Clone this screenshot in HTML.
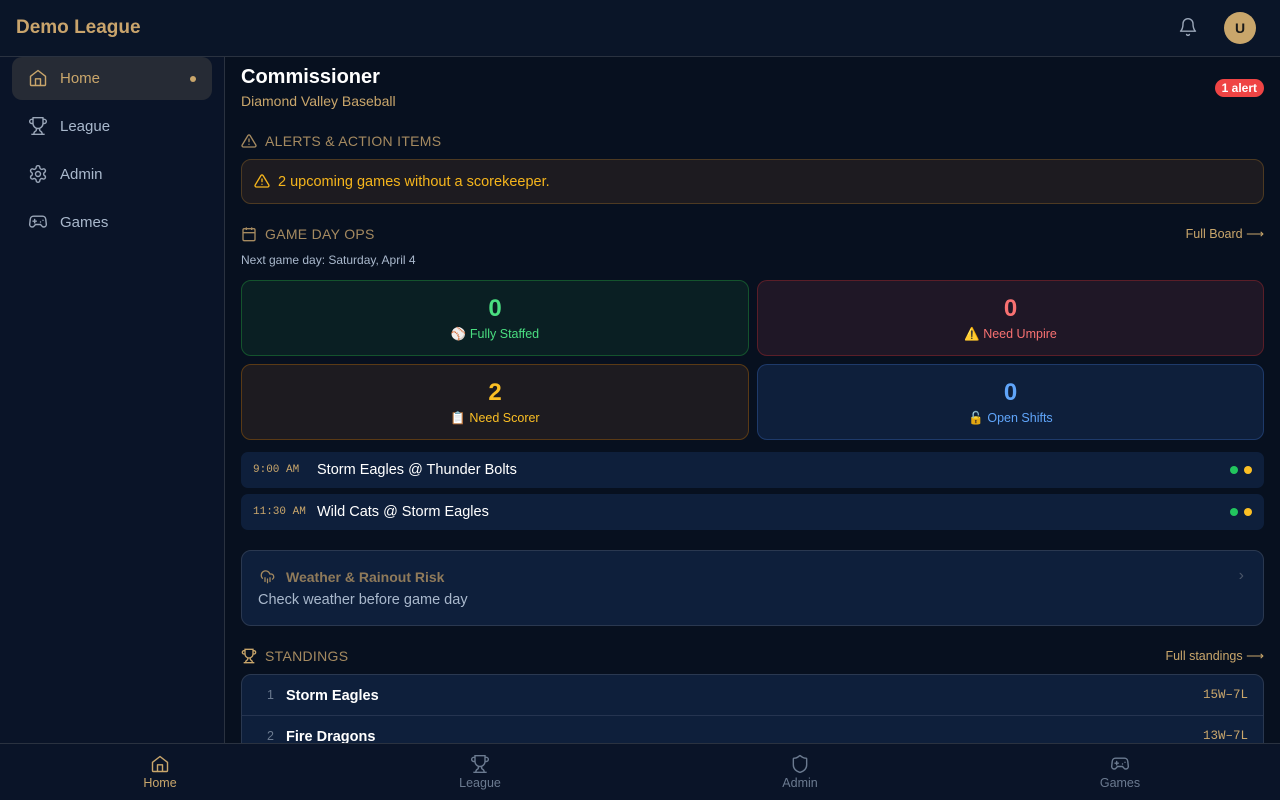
<!DOCTYPE html>
<html><head><meta charset="utf-8"><style>
*{box-sizing:border-box;margin:0;padding:0}
body{width:1280px;height:800px;overflow:hidden;background:#07101f;font-family:"Liberation Sans",sans-serif;color:#fff;position:relative}
.hdr{position:absolute;left:0;top:0;width:1280px;height:57px;background:#0a1528;border-bottom:1px solid #2a3240}
.logo{position:absolute;left:16px;top:17px;font-size:19px;font-weight:bold;color:#c9a46c}
.bell{position:absolute;left:1178px;top:17px}
.av{position:absolute;left:1224px;top:12px;width:32px;height:32px;border-radius:50%;background:#c9a66b;color:#1a1a1a;font-weight:bold;font-size:14px;text-align:center;line-height:32px}
.side{position:absolute;left:0;top:57px;width:225px;height:686px;background:#0a1428;border-right:1px solid #2a3240}
.nav{position:absolute;left:12px;width:200px;height:43px;border-radius:10px;font-size:15px;color:#a9b8cc}
.nav svg{position:absolute;left:16px;top:11px}
.nav span{position:absolute;left:48px;top:13px}
.nav.act{background:#262b35;color:#c9a66b}
.dot{position:absolute;right:16px;top:19px;width:6px;height:6px;border-radius:50%;background:#c9a66b}
.main{position:absolute;left:241px;top:57px;width:1023px}
.abs{position:absolute}
.sec{font-size:14px;color:#a58a60;letter-spacing:.3px}
.card{position:absolute;border-radius:10px;border:1px solid}
.big{position:absolute;width:100%;top:14px;text-align:center;font-size:24px;font-weight:bold}
.lbl{position:absolute;width:100%;top:46px;text-align:center;font-size:12.5px}
.game{position:absolute;left:0;width:1023px;height:36px;background:#0e1f3b;border-radius:7px}
.game .t{position:absolute;left:12px;top:12px;font-family:"Liberation Mono",monospace;font-size:11px;color:#c9a66b}
.game .n{position:absolute;left:76px;top:10px;font-size:14.5px}
.gd{position:absolute;top:14px;width:8px;height:8px;border-radius:50%}
.bot{position:absolute;left:0;top:743px;width:1280px;height:57px;background:#0a1428;border-top:1px solid #2a3240}
.bi{position:absolute;top:0;width:320px;text-align:center;font-size:12.5px;color:#6b7a90}
.bi svg{display:block;margin:10px auto 2px}
</style></head><body>
<div class="hdr"><div class="logo">Demo League</div>
<svg class="bell" width="20" height="20" viewBox="0 0 24 24" fill="none" stroke="#9aa6b8" stroke-width="1.7" stroke-linecap="round" stroke-linejoin="round"><path d="M6 8a6 6 0 0 1 12 0c0 7 3 9 3 9H3s3-2 3-9"/><path d="M10.3 21a1.9 1.9 0 0 0 3.4 0"/></svg>
<div class="av">U</div></div>
<div class="side">
<div class="nav act" style="top:0"><svg width="20" height="20" viewBox="0 0 24 24" fill="none" stroke="#c9a66b" stroke-width="1.7" stroke-linejoin="round"><path d="M3 10l9-7 9 7v10a1 1 0 0 1-1 1H4a1 1 0 0 1-1-1z"/><path d="M9 21v-8h6v8"/></svg><span>Home</span><div class="dot"></div></div>
<div class="nav" style="top:48px"><svg width="20" height="20" viewBox="0 0 24 24" fill="none" stroke="#9aa6b8" stroke-width="1.7" stroke-linejoin="round"><path d="M6 9H4.5a2.5 2.5 0 0 1 0-5H6M18 9h1.5a2.5 2.5 0 0 0 0-5H18M4 22h16M10 14.7V17c0 .6-.5 1-1 1.2-1.2.5-2 2-2 3.8M14 14.7V17c0 .6.5 1 1 1.2 1.2.5 2 2 2 3.8M18 2H6v7a6 6 0 0 0 12 0z"/></svg><span>League</span></div>
<div class="nav" style="top:96px"><svg width="20" height="20" viewBox="0 0 24 24" fill="none" stroke="#9aa6b8" stroke-width="1.7"><circle cx="12" cy="12" r="3"/><path d="M12.2 2h-.4a2 2 0 0 0-2 2v.2a2 2 0 0 1-1 1.7l-.4.3a2 2 0 0 1-2 0l-.2-.1a2 2 0 0 0-2.7.7l-.2.4a2 2 0 0 0 .7 2.7l.2.1a2 2 0 0 1 1 1.7v.5a2 2 0 0 1-1 1.7l-.2.1a2 2 0 0 0-.7 2.7l.2.4a2 2 0 0 0 2.7.7l.2-.1a2 2 0 0 1 2 0l.4.3a2 2 0 0 1 1 1.7v.2a2 2 0 0 0 2 2h.4a2 2 0 0 0 2-2v-.2a2 2 0 0 1 1-1.7l.4-.3a2 2 0 0 1 2 0l.2.1a2 2 0 0 0 2.7-.7l.2-.4a2 2 0 0 0-.7-2.7l-.2-.1a2 2 0 0 1-1-1.7v-.5a2 2 0 0 1 1-1.7l.2-.1a2 2 0 0 0 .7-2.7l-.2-.4a2 2 0 0 0-2.7-.7l-.2.1a2 2 0 0 1-2 0l-.4-.3a2 2 0 0 1-1-1.7V4a2 2 0 0 0-2-2z"/></svg><span>Admin</span></div>
<div class="nav" style="top:144px"><svg width="20" height="20" viewBox="0 0 24 24" fill="none" stroke="#9aa6b8" stroke-width="1.7" stroke-linecap="round"><path d="M6 11h4M8 9v4M15 12h.01M18 10h.01"/><path d="M17.3 5H6.7a4 4 0 0 0-4 3.6L2 15a3 3 0 0 0 3 3c1 0 2-.5 2.5-1.3L9 15h6l1.5 1.7c.5.8 1.5 1.3 2.5 1.3a3 3 0 0 0 3-3l-.7-6.4a4 4 0 0 0-4-3.6z"/></svg><span>Games</span></div>
</div>
<div class="main">
<div class="abs" style="left:0;top:9px;font-size:20px;font-weight:bold">Commissioner</div>
<div class="abs" style="left:0;top:36px;font-size:14px;color:#c9a66b">Diamond Valley Baseball</div>
<div class="abs" style="right:0;top:22px;background:#ef4444;border-radius:9px;padding:2px 7px;font-size:12px;font-weight:bold">1 alert</div>
<svg class="abs" style="left:0;top:76px" width="16" height="16" viewBox="0 0 24 24" fill="none" stroke="#a58a60" stroke-width="2" stroke-linecap="round"><path d="M10.3 3.9 1.8 18a2 2 0 0 0 1.7 3h17a2 2 0 0 0 1.7-3L13.7 3.9a2 2 0 0 0-3.4 0zM12 9v4M12 17h.01"/></svg>
<div class="abs sec" style="left:24px;top:76px">ALERTS &amp; ACTION ITEMS</div>
<div class="card" style="left:0;top:102px;width:1023px;height:45px;background:#1d1b20;border-color:#4d3a22"></div>
<svg class="abs" style="left:13px;top:116px" width="16" height="16" viewBox="0 0 24 24" fill="none" stroke="#f5b51c" stroke-width="2" stroke-linecap="round"><path d="M10.3 3.9 1.8 18a2 2 0 0 0 1.7 3h17a2 2 0 0 0 1.7-3L13.7 3.9a2 2 0 0 0-3.4 0zM12 9v4M12 17h.01"/></svg>
<div class="abs" style="left:37px;top:117px;font-size:14.5px;color:#f5b51c">2 upcoming games without a scorekeeper.</div>
<svg class="abs" style="left:0;top:169px" width="16" height="16" viewBox="0 0 24 24" fill="none" stroke="#a58a60" stroke-width="2"><rect x="3" y="4" width="18" height="18" rx="2"/><path d="M16 2v4M8 2v4M3 10h18M8 14h.01M12 14h.01M16 14h.01M8 18h.01M12 18h.01M16 18h.01"/></svg>
<div class="abs sec" style="left:24px;top:169px">GAME DAY OPS</div>
<div class="abs" style="right:0;top:169px;font-size:12.5px;color:#c9a66b">Full Board ⟶</div>
<div class="abs" style="left:0;top:196px;font-size:12px;color:#a9b8cc">Next game day: Saturday, April 4</div>
<div class="card" style="left:0;top:223px;width:508px;height:76px;background:#0a1f23;border-color:#14532d"><div class="big" style="color:#4ade80">0</div><div class="lbl" style="color:#4ade80">⚾ Fully Staffed</div></div>
<div class="card" style="left:516px;top:223px;width:507px;height:76px;background:#1f1726;border-color:#5a1e28"><div class="big" style="color:#f87171">0</div><div class="lbl" style="color:#f87171">⚠️ Need Umpire</div></div>
<div class="card" style="left:0;top:307px;width:508px;height:76px;background:#1d1b20;border-color:#5a3a15"><div class="big" style="color:#fbbf24">2</div><div class="lbl" style="color:#fbbf24">📋 Need Scorer</div></div>
<div class="card" style="left:516px;top:307px;width:507px;height:76px;background:#0e1f3b;border-color:#1e3a6a"><div class="big" style="color:#60a5fa">0</div><div class="lbl" style="color:#60a5fa">🔓 Open Shifts</div></div>
<div class="game" style="top:395px"><div class="t">9:00 AM</div><div class="n">Storm Eagles @ Thunder Bolts</div><div class="gd" style="right:26px;background:#22c55e"></div><div class="gd" style="right:12px;background:#fbbf24"></div></div>
<div class="game" style="top:437px"><div class="t">11:30 AM</div><div class="n">Wild Cats @ Storm Eagles</div><div class="gd" style="right:26px;background:#22c55e"></div><div class="gd" style="right:12px;background:#fbbf24"></div></div>
<div class="card" style="left:0;top:493px;width:1023px;height:76px;background:#0e1f3b;border-color:#2a3850"></div>
<svg class="abs" style="left:19px;top:512px" width="15" height="15" viewBox="0 0 24 24" fill="none" stroke="#a58a60" stroke-width="2" stroke-linecap="round"><path d="M4 14.9A7 7 0 1 1 15.7 8h1.8a4.5 4.5 0 0 1 2.5 8.2M16 14v6M8 14v6M12 16v6"/></svg>
<div class="abs" style="left:45px;top:512px;font-size:14px;font-weight:bold;color:#8f7a5a">Weather &amp; Rainout Risk</div>
<div class="abs" style="left:17px;top:535px;font-size:14.5px;color:#a9b8cc">Check weather before game day</div>
<div class="abs" style="right:20px;top:510px;font-size:16px;color:#4a5568">›</div>
<svg class="abs" style="left:0;top:591px" width="16" height="16" viewBox="0 0 24 24" fill="none" stroke="#c9a66b" stroke-width="2"><path d="M6 9H4.5a2.5 2.5 0 0 1 0-5H6M18 9h1.5a2.5 2.5 0 0 0 0-5H18M4 22h16M10 14.7V17c0 .6-.5 1-1 1.2-1.2.5-2 2-2 3.8M14 14.7V17c0 .6.5 1 1 1.2 1.2.5 2 2 2 3.8M18 2H6v7a6 6 0 0 0 12 0z"/></svg>
<div class="abs sec" style="left:24px;top:591px">STANDINGS</div>
<div class="abs" style="right:0;top:591px;font-size:12.5px;color:#c9a66b">Full standings ⟶</div>
<div class="card" style="left:0;top:617px;width:1023px;height:120px;background:#0e1f3b;border-color:#2a3850"></div>
<div class="abs" style="left:1px;top:658px;width:1021px;height:1px;background:#253450"></div>
<div class="abs" style="left:26px;top:631px;font-size:12.5px;color:#6b7a90">1</div>
<div class="abs" style="left:45px;top:631px;font-size:14.5px;font-weight:bold">Storm Eagles</div>
<div class="abs" style="right:16px;top:631px;font-family:'Liberation Mono',monospace;font-size:12.5px;color:#c9a66b">15W–7L</div>
<div class="abs" style="left:26px;top:672px;font-size:12.5px;color:#6b7a90">2</div>
<div class="abs" style="left:45px;top:672px;font-size:14.5px;font-weight:bold">Fire Dragons</div>
<div class="abs" style="right:16px;top:672px;font-family:'Liberation Mono',monospace;font-size:12.5px;color:#c9a66b">13W–7L</div>
</div>
<div class="bot">
<div class="bi" style="left:0;color:#c9a66b"><svg width="20" height="20" viewBox="0 0 24 24" fill="none" stroke="#c9a66b" stroke-width="1.7" stroke-linejoin="round"><path d="M3 10l9-7 9 7v10a1 1 0 0 1-1 1H4a1 1 0 0 1-1-1z"/><path d="M9 21v-8h6v8"/></svg>Home</div>
<div class="bi" style="left:320px"><svg width="20" height="20" viewBox="0 0 24 24" fill="none" stroke="#6b7a90" stroke-width="1.7"><path d="M6 9H4.5a2.5 2.5 0 0 1 0-5H6M18 9h1.5a2.5 2.5 0 0 0 0-5H18M4 22h16M10 14.7V17c0 .6-.5 1-1 1.2-1.2.5-2 2-2 3.8M14 14.7V17c0 .6.5 1 1 1.2 1.2.5 2 2 2 3.8M18 2H6v7a6 6 0 0 0 12 0z"/></svg>League</div>
<div class="bi" style="left:640px"><svg width="20" height="20" viewBox="0 0 24 24" fill="none" stroke="#6b7a90" stroke-width="1.7"><path d="M20 13c0 5-3.5 7.5-7.7 9a1 1 0 0 1-.6 0C7.5 20.5 4 18 4 13V6a1 1 0 0 1 1-1c2 0 4.5-1.2 6.2-2.7a1.2 1.2 0 0 1 1.5 0C14.5 3.8 17 5 19 5a1 1 0 0 1 1 1z"/></svg>Admin</div>
<div class="bi" style="left:960px"><svg width="20" height="20" viewBox="0 0 24 24" fill="none" stroke="#6b7a90" stroke-width="1.7" stroke-linecap="round"><path d="M6 11h4M8 9v4M15 12h.01M18 10h.01"/><path d="M17.3 5H6.7a4 4 0 0 0-4 3.6L2 15a3 3 0 0 0 3 3c1 0 2-.5 2.5-1.3L9 15h6l1.5 1.7c.5.8 1.5 1.3 2.5 1.3a3 3 0 0 0 3-3l-.7-6.4a4 4 0 0 0-4-3.6z"/></svg>Games</div>
</div>
</body></html>
